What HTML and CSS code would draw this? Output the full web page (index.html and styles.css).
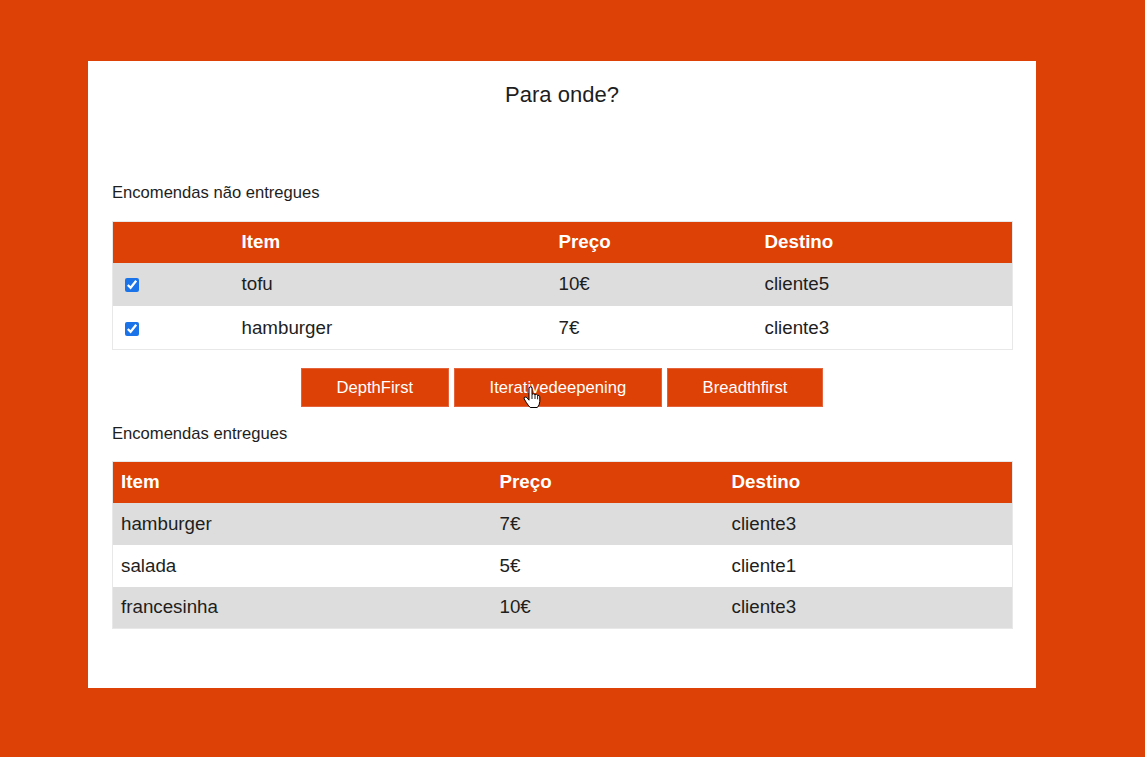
FILE: index.html
```html
<!DOCTYPE html>
<html lang="pt">
<head>
<meta charset="utf-8">
<title>Para onde?</title>
<link rel="stylesheet" href="styles.css">
</head>
<body>
<div class="card">
  <h1 class="title">Para onde?</h1>
  <p class="label label-first">Encomendas não entregues</p>
  <table class="tbl tbl-pending">
    <colgroup><col class="c0"><col class="c1"><col class="c2"><col class="c3"></colgroup>
    <thead><tr><th></th><th>Item</th><th>Preço</th><th>Destino</th></tr></thead>
    <tbody>
      <tr class="r1"><td><input type="checkbox" checked></td><td>tofu</td><td>10€</td><td>cliente5</td></tr>
      <tr class="r2"><td><input type="checkbox" checked></td><td>hamburger</td><td>7€</td><td>cliente3</td></tr>
    </tbody>
  </table>
  <div class="buttons">
    <button class="btn">DepthFirst</button>
    <button class="btn btn-hover">Iterativedeepening
      <svg class="cursor" width="18" height="23" viewBox="0 0 18 23">
        <path d="M6,1.6 Q7.5,0.2 9,1.6 V8.3 Q10.5,7.2 12,8.5 Q13.6,7.6 14.6,9.3 Q16.3,8.8 16.8,10.8 V15.5 Q16.6,19.3 14.3,21.5 H7.2 Q5.2,19.5 3.2,16.3 L1.2,12.9 Q0.6,11.3 2.1,11 Q3.2,10.9 4.2,12.1 L6,14.2 Z" fill="#fff" stroke="#000" stroke-width="1" stroke-linejoin="round"/>
        <path d="M9,8.3 V13 M12,8.5 V13 M14.6,9.3 V13.3" fill="none" stroke="#000" stroke-width="0.9"/>
      </svg>
    </button>
    <button class="btn">Breadthfirst</button>
  </div>
  <p class="label label-second">Encomendas entregues</p>
  <table class="tbl tbl-done">
    <colgroup><col class="d1"><col class="d2"><col class="d3"></colgroup>
    <thead><tr><th>Item</th><th>Preço</th><th>Destino</th></tr></thead>
    <tbody>
      <tr class="r1"><td>hamburger</td><td>7€</td><td>cliente3</td></tr>
      <tr class="r2"><td>salada</td><td>5€</td><td>cliente1</td></tr>
      <tr class="r1"><td>francesinha</td><td>10€</td><td>cliente3</td></tr>
    </tbody>
  </table>
</div>
</body>
</html>
```
FILE: styles.css
```css
html, body {
  margin: 0;
  padding: 0;
}
body {
  background: #dd4105;
  font-family: "Liberation Sans", Arial, sans-serif;
  color: #1e1e1e;
  padding: 61px 0 0 88px;
  height: 757px;
  box-sizing: border-box;
  overflow: hidden;
}
.card {
  width: 900px;
  height: 606px;
  padding: 21px 24px 0;
  box-sizing: content-box;
  background: #fff;
  display: flex;
  flex-direction: column;
}
.title {
  margin: 0;
  font-size: 22px;
  line-height: 26px;
  font-weight: normal;
  text-align: center;
}
.label {
  margin: 0;
  font-size: 16.6px;
  line-height: 19px;
}
.label-first {
  margin-top: 75px;
}
.label-second {
  margin-top: 17px;
}
.tbl {
  width: 900px;
  border-collapse: collapse;
  table-layout: fixed;
  font-size: 18.75px;
  margin-top: 19px;
  border: 1px solid #e8e8e8;
}
.tbl-done {
  margin-top: 18px;
}
.tbl th {
  background: #dd4105;
  color: #fff;
  font-weight: bold;
  text-align: left;
  height: 41px;
  padding: 0 0 0 8px;
  box-sizing: border-box;
}
.tbl td {
  padding: 0 0 0 8px;
  box-sizing: border-box;
}
.tbl-pending td {
  height: 43.5px;
}
.tbl-done td {
  height: 42px;
}
.r1 td {
  background: #dddddd;
}
.r2 td {
  background: #fff;
}
.c0 { width: 121px; }
.c1 { width: 317px; }
.c2 { width: 206px; }
.c3 { width: 256px; }
.d1 { width: 379px; }
.d2 { width: 232px; }
.d3 { width: 289px; }
.tbl input[type="checkbox"] {
  width: 14px;
  height: 14px;
  margin: 3px 3px 3px 4px;
  vertical-align: middle;
  accent-color: #1a73e8;
}
.buttons {
  display: flex;
  justify-content: center;
  gap: 5.5px;
  margin-top: 18px;
}
.btn {
  position: relative;
  height: 39px;
  padding: 0 34.5px;
  background: #dd4105;
  border: 1px solid #e4633a;
  color: #fff;
  font-family: "Liberation Sans", Arial, sans-serif;
  font-size: 16.6px;
  cursor: pointer;
}
.cursor {
  position: absolute;
  left: 68px;
  top: 17px;
}
```
